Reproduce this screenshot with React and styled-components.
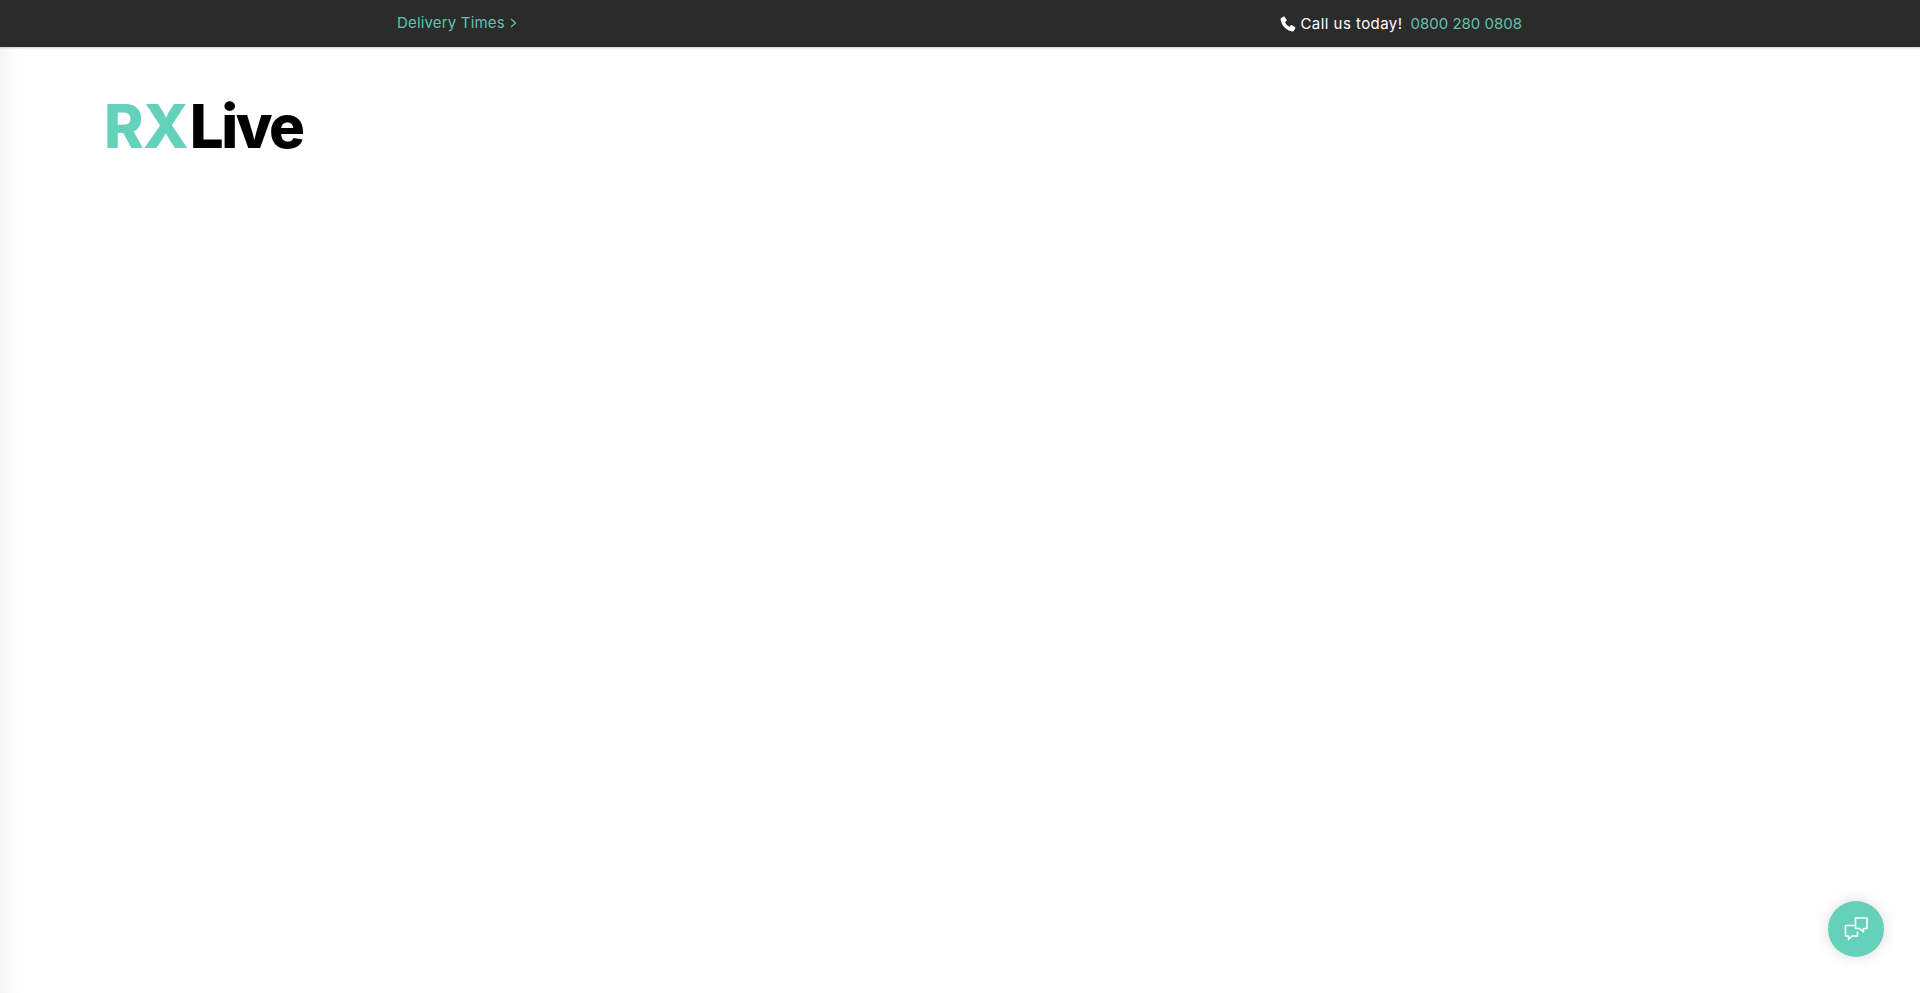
import React from 'react';
import styled, { createGlobalStyle } from 'styled-components';

const GlobalStyle = createGlobalStyle`
  html, body {
    margin: 0;
    padding: 0;
    background: #fff;
    font-family: 'Inter', 'Noto Sans', sans-serif;
  }
`;

const Page = styled.div`
  min-height: 993px;
  background: linear-gradient(to right, #f5f5f5 0, #fbfbfb 10px, #fff 20px);
`;

const TopBar = styled.div`
  height: 47px;
  box-sizing: border-box;
  padding: 0 398px 0 397px;
  background: #2b2b2b;
  display: flex;
  align-items: center;
  justify-content: space-between;
  font-size: 15px;
  box-shadow: 0 1px 2px rgba(0, 0, 0, 0.2);
`;

const DeliveryLink = styled.a`
  color: #5fc4ab;
  display: flex;
  align-items: center;
  gap: 5px;
  letter-spacing: 0.17px;
  margin-top: -2px;
`;

const Chevron = styled.svg`
  width: 7px;
  height: 10px;
`;

const CallGroup = styled.div`
  display: flex;
  align-items: center;
  color: #fff;
  letter-spacing: 0.45px;
`;

const PhoneIcon = styled.svg`
  width: 16px;
  height: 16px;
  margin-right: 4px;
`;

const PhoneNumber = styled.a`
  color: #5fc4ab;
  margin-left: 8px;
  letter-spacing: 0;
`;

const Header = styled.header`
  padding: 40px 0 0 104px;
`;

const Logo = styled.div`
  font-size: 60px;
  font-weight: 800;
  line-height: 78px;
  color: #000;
  display: flex;
  gap: 2px;
`;

const LogoAccent = styled.span`
  color: #64d1bb;
  letter-spacing: -0.8px;
`;

const LogoWord = styled.span`
  letter-spacing: -2.5px;
`;

const ChatButton = styled.button`
  position: fixed;
  right: 36px;
  bottom: 36px;
  width: 56px;
  height: 56px;
  padding: 0;
  border: 0;
  border-radius: 50%;
  background: #64d1bb;
  box-shadow: 0 0 14px rgba(0, 0, 0, 0.15);
  display: flex;
  align-items: center;
  justify-content: center;
`;

const ChatIcon = styled.svg`
  width: 24px;
  height: 24px;
  fill: none;
  stroke: #fff;
  stroke-width: 1.6;
  stroke-linejoin: round;
`;

const App = () => (
  <Page>
    <GlobalStyle />
    <TopBar>
      <DeliveryLink>
        Delivery Times
        <Chevron viewBox="0 0 7 10">
          <path d="M1 1l4.5 4L1 9" fill="none" stroke="#5fc4ab" strokeWidth="1.2" />
        </Chevron>
      </DeliveryLink>
      <CallGroup>
        <PhoneIcon viewBox="0 0 16 16">
          <path
            fill="#fff"
            d="M3.6.6 1.3 1.9C.7 2.3.5 3 .6 3.8c.6 3.2 2.1 5.900 4.200 8 2.100 2 4.600 3.300 7.200 3.700.9.100 1.600-.2 2-.9l1.300-2.200c.2-.4.1-.8-.2-1.100l-3-2.100c-.4-.2-.8-.2-1.100.1L9.500 10.800c-2-1-3.400-2.500-4.400-4.500l1.400-1.500c.3-.3.3-.7.1-1.100L4.700.9C4.400.5 4 .4 3.600.6Z"
          />
        </PhoneIcon>
        Call us today!
        <PhoneNumber>0800 280 0808</PhoneNumber>
      </CallGroup>
    </TopBar>
    <Header>
      <Logo>
        <LogoAccent>RX</LogoAccent>
        <LogoWord>Live</LogoWord>
      </Logo>
    </Header>
    <ChatButton aria-label="Chat">
      <ChatIcon viewBox="0 0 24 24">
        <path d="M10.500 8.500H1.500V19h3v3.500L8 19h5.500v-4.500" />
        <path d="M11.500 1H23v10.500h-3.500V15l-4-3.500h-4z" />
      </ChatIcon>
    </ChatButton>
  </Page>
);

export default App;
